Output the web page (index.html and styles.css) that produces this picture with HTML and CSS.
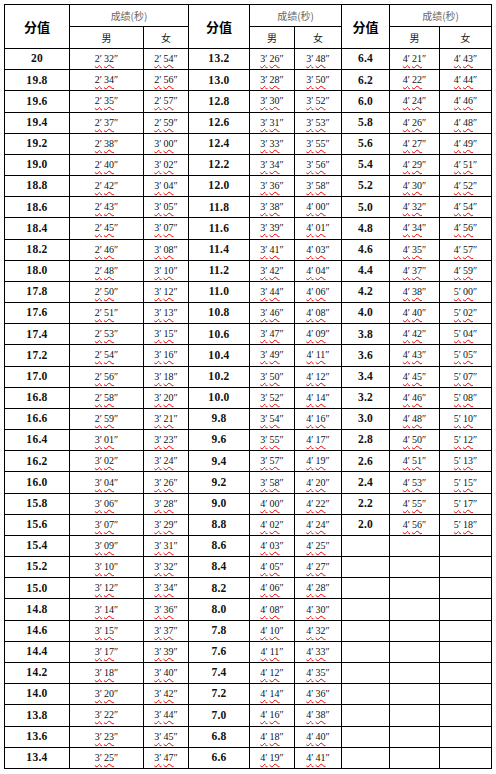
FILE: index.html
```html
<!DOCTYPE html>
<html lang="zh">
<head>
<meta charset="utf-8">
<title>分值 成绩</title>
<link rel="stylesheet" href="styles.css">
</head>
<body>
<table class="tbl">
<colgroup>
<col class="c1"><col class="c2"><col class="c3">
<col class="c4"><col class="c5"><col class="c6">
<col class="c7"><col class="c8"><col class="c9">
</colgroup>
<thead>
<tr class="hr"><th rowspan="2" class="h">分值</th><th colspan="2" class="g">成绩(秒)</th><th rowspan="2" class="h">分值</th><th colspan="2" class="g">成绩(秒)</th><th rowspan="2" class="h">分值</th><th colspan="2" class="g">成绩(秒)</th></tr>
<tr class="hr"><th class="x">男</th><th class="x">女</th><th class="x">男</th><th class="x">女</th><th class="x">男</th><th class="x">女</th></tr>
</thead>
<tbody>
<tr><td class="s">20</td><td class="t"><u>2<i>′</i>32</u>″</td><td class="t"><u>2<i>′</i>54</u>″</td><td class="s">13.2</td><td class="t"><u>3<i>′</i>26</u>″</td><td class="t"><u>3<i>′</i>48</u>″</td><td class="s">6.4</td><td class="t"><u>4<i>′</i>21</u>″</td><td class="t"><u>4<i>′</i>43</u>″</td></tr>
<tr><td class="s">19.8</td><td class="t"><u>2<i>′</i>34</u>″</td><td class="t"><u>2<i>′</i>56</u>″</td><td class="s">13.0</td><td class="t"><u>3<i>′</i>28</u>″</td><td class="t"><u>3<i>′</i>50</u>″</td><td class="s">6.2</td><td class="t"><u>4<i>′</i>22</u>″</td><td class="t"><u>4<i>′</i>44</u>″</td></tr>
<tr><td class="s">19.6</td><td class="t"><u>2<i>′</i>35</u>″</td><td class="t"><u>2<i>′</i>57</u>″</td><td class="s">12.8</td><td class="t"><u>3<i>′</i>30</u>″</td><td class="t"><u>3<i>′</i>52</u>″</td><td class="s">6.0</td><td class="t"><u>4<i>′</i>24</u>″</td><td class="t"><u>4<i>′</i>46</u>″</td></tr>
<tr><td class="s">19.4</td><td class="t"><u>2<i>′</i>37</u>″</td><td class="t"><u>2<i>′</i>59</u>″</td><td class="s">12.6</td><td class="t"><u>3<i>′</i>31</u>″</td><td class="t"><u>3<i>′</i>53</u>″</td><td class="s">5.8</td><td class="t"><u>4<i>′</i>26</u>″</td><td class="t"><u>4<i>′</i>48</u>″</td></tr>
<tr><td class="s">19.2</td><td class="t"><u>2<i>′</i>38</u>″</td><td class="t"><u>3<i>′</i>00</u>″</td><td class="s">12.4</td><td class="t"><u>3<i>′</i>33</u>″</td><td class="t"><u>3<i>′</i>55</u>″</td><td class="s">5.6</td><td class="t"><u>4<i>′</i>27</u>″</td><td class="t"><u>4<i>′</i>49</u>″</td></tr>
<tr><td class="s">19.0</td><td class="t"><u>2<i>′</i>40</u>″</td><td class="t"><u>3<i>′</i>02</u>″</td><td class="s">12.2</td><td class="t"><u>3<i>′</i>34</u>″</td><td class="t"><u>3<i>′</i>56</u>″</td><td class="s">5.4</td><td class="t"><u>4<i>′</i>29</u>″</td><td class="t"><u>4<i>′</i>51</u>″</td></tr>
<tr><td class="s">18.8</td><td class="t"><u>2<i>′</i>42</u>″</td><td class="t"><u>3<i>′</i>04</u>″</td><td class="s">12.0</td><td class="t"><u>3<i>′</i>36</u>″</td><td class="t"><u>3<i>′</i>58</u>″</td><td class="s">5.2</td><td class="t"><u>4<i>′</i>30</u>″</td><td class="t"><u>4<i>′</i>52</u>″</td></tr>
<tr><td class="s">18.6</td><td class="t"><u>2<i>′</i>43</u>″</td><td class="t"><u>3<i>′</i>05</u>″</td><td class="s">11.8</td><td class="t"><u>3<i>′</i>38</u>″</td><td class="t"><u>4<i>′</i>00</u>″</td><td class="s">5.0</td><td class="t"><u>4<i>′</i>32</u>″</td><td class="t"><u>4<i>′</i>54</u>″</td></tr>
<tr><td class="s">18.4</td><td class="t"><u>2<i>′</i>45</u>″</td><td class="t"><u>3<i>′</i>07</u>″</td><td class="s">11.6</td><td class="t"><u>3<i>′</i>39</u>″</td><td class="t"><u>4<i>′</i>01</u>″</td><td class="s">4.8</td><td class="t"><u>4<i>′</i>34</u>″</td><td class="t"><u>4<i>′</i>56</u>″</td></tr>
<tr><td class="s">18.2</td><td class="t"><u>2<i>′</i>46</u>″</td><td class="t"><u>3<i>′</i>08</u>″</td><td class="s">11.4</td><td class="t"><u>3<i>′</i>41</u>″</td><td class="t"><u>4<i>′</i>03</u>″</td><td class="s">4.6</td><td class="t"><u>4<i>′</i>35</u>″</td><td class="t"><u>4<i>′</i>57</u>″</td></tr>
<tr><td class="s">18.0</td><td class="t"><u>2<i>′</i>48</u>″</td><td class="t"><u>3<i>′</i>10</u>″</td><td class="s">11.2</td><td class="t"><u>3<i>′</i>42</u>″</td><td class="t"><u>4<i>′</i>04</u>″</td><td class="s">4.4</td><td class="t"><u>4<i>′</i>37</u>″</td><td class="t"><u>4<i>′</i>59</u>″</td></tr>
<tr><td class="s">17.8</td><td class="t"><u>2<i>′</i>50</u>″</td><td class="t"><u>3<i>′</i>12</u>″</td><td class="s">11.0</td><td class="t"><u>3<i>′</i>44</u>″</td><td class="t"><u>4<i>′</i>06</u>″</td><td class="s">4.2</td><td class="t"><u>4<i>′</i>38</u>″</td><td class="t"><u>5<i>′</i>00</u>″</td></tr>
<tr><td class="s">17.6</td><td class="t"><u>2<i>′</i>51</u>″</td><td class="t"><u>3<i>′</i>13</u>″</td><td class="s">10.8</td><td class="t"><u>3<i>′</i>46</u>″</td><td class="t"><u>4<i>′</i>08</u>″</td><td class="s">4.0</td><td class="t"><u>4<i>′</i>40</u>″</td><td class="t"><u>5<i>′</i>02</u>″</td></tr>
<tr><td class="s">17.4</td><td class="t"><u>2<i>′</i>53</u>″</td><td class="t"><u>3<i>′</i>15</u>″</td><td class="s">10.6</td><td class="t"><u>3<i>′</i>47</u>″</td><td class="t"><u>4<i>′</i>09</u>″</td><td class="s">3.8</td><td class="t"><u>4<i>′</i>42</u>″</td><td class="t"><u>5<i>′</i>04</u>″</td></tr>
<tr><td class="s">17.2</td><td class="t"><u>2<i>′</i>54</u>″</td><td class="t"><u>3<i>′</i>16</u>″</td><td class="s">10.4</td><td class="t"><u>3<i>′</i>49</u>″</td><td class="t"><u>4<i>′</i>11</u>″</td><td class="s">3.6</td><td class="t"><u>4<i>′</i>43</u>″</td><td class="t"><u>5<i>′</i>05</u>″</td></tr>
<tr><td class="s">17.0</td><td class="t"><u>2<i>′</i>56</u>″</td><td class="t"><u>3<i>′</i>18</u>″</td><td class="s">10.2</td><td class="t"><u>3<i>′</i>50</u>″</td><td class="t"><u>4<i>′</i>12</u>″</td><td class="s">3.4</td><td class="t"><u>4<i>′</i>45</u>″</td><td class="t"><u>5<i>′</i>07</u>″</td></tr>
<tr><td class="s">16.8</td><td class="t"><u>2<i>′</i>58</u>″</td><td class="t"><u>3<i>′</i>20</u>″</td><td class="s">10.0</td><td class="t"><u>3<i>′</i>52</u>″</td><td class="t"><u>4<i>′</i>14</u>″</td><td class="s">3.2</td><td class="t"><u>4<i>′</i>46</u>″</td><td class="t"><u>5<i>′</i>08</u>″</td></tr>
<tr><td class="s">16.6</td><td class="t"><u>2<i>′</i>59</u>″</td><td class="t"><u>3<i>′</i>21</u>″</td><td class="s">9.8</td><td class="t"><u>3<i>′</i>54</u>″</td><td class="t"><u>4<i>′</i>16</u>″</td><td class="s">3.0</td><td class="t"><u>4<i>′</i>48</u>″</td><td class="t"><u>5<i>′</i>10</u>″</td></tr>
<tr><td class="s">16.4</td><td class="t"><u>3<i>′</i>01</u>″</td><td class="t"><u>3<i>′</i>23</u>″</td><td class="s">9.6</td><td class="t"><u>3<i>′</i>55</u>″</td><td class="t"><u>4<i>′</i>17</u>″</td><td class="s">2.8</td><td class="t"><u>4<i>′</i>50</u>″</td><td class="t"><u>5<i>′</i>12</u>″</td></tr>
<tr><td class="s">16.2</td><td class="t"><u>3<i>′</i>02</u>″</td><td class="t"><u>3<i>′</i>24</u>″</td><td class="s">9.4</td><td class="t"><u>3<i>′</i>57</u>″</td><td class="t"><u>4<i>′</i>19</u>″</td><td class="s">2.6</td><td class="t"><u>4<i>′</i>51</u>″</td><td class="t"><u>5<i>′</i>13</u>″</td></tr>
<tr><td class="s">16.0</td><td class="t"><u>3<i>′</i>04</u>″</td><td class="t"><u>3<i>′</i>26</u>″</td><td class="s">9.2</td><td class="t"><u>3<i>′</i>58</u>″</td><td class="t"><u>4<i>′</i>20</u>″</td><td class="s">2.4</td><td class="t"><u>4<i>′</i>53</u>″</td><td class="t"><u>5<i>′</i>15</u>″</td></tr>
<tr><td class="s">15.8</td><td class="t"><u>3<i>′</i>06</u>″</td><td class="t"><u>3<i>′</i>28</u>″</td><td class="s">9.0</td><td class="t"><u>4<i>′</i>00</u>″</td><td class="t"><u>4<i>′</i>22</u>″</td><td class="s">2.2</td><td class="t"><u>4<i>′</i>55</u>″</td><td class="t"><u>5<i>′</i>17</u>″</td></tr>
<tr><td class="s">15.6</td><td class="t"><u>3<i>′</i>07</u>″</td><td class="t"><u>3<i>′</i>29</u>″</td><td class="s">8.8</td><td class="t"><u>4<i>′</i>02</u>″</td><td class="t"><u>4<i>′</i>24</u>″</td><td class="s">2.0</td><td class="t"><u>4<i>′</i>56</u>″</td><td class="t"><u>5<i>′</i>18</u>″</td></tr>
<tr><td class="s">15.4</td><td class="t"><u>3<i>′</i>09</u>″</td><td class="t"><u>3<i>′</i>31</u>″</td><td class="s">8.6</td><td class="t"><u>4<i>′</i>03</u>″</td><td class="t"><u>4<i>′</i>25</u>″</td><td></td><td></td><td></td></tr>
<tr><td class="s">15.2</td><td class="t"><u>3<i>′</i>10</u>″</td><td class="t"><u>3<i>′</i>32</u>″</td><td class="s">8.4</td><td class="t"><u>4<i>′</i>05</u>″</td><td class="t"><u>4<i>′</i>27</u>″</td><td></td><td></td><td></td></tr>
<tr><td class="s">15.0</td><td class="t"><u>3<i>′</i>12</u>″</td><td class="t"><u>3<i>′</i>34</u>″</td><td class="s">8.2</td><td class="t"><u>4<i>′</i>06</u>″</td><td class="t"><u>4<i>′</i>28</u>″</td><td></td><td></td><td></td></tr>
<tr><td class="s">14.8</td><td class="t"><u>3<i>′</i>14</u>″</td><td class="t"><u>3<i>′</i>36</u>″</td><td class="s">8.0</td><td class="t"><u>4<i>′</i>08</u>″</td><td class="t"><u>4<i>′</i>30</u>″</td><td></td><td></td><td></td></tr>
<tr><td class="s">14.6</td><td class="t"><u>3<i>′</i>15</u>″</td><td class="t"><u>3<i>′</i>37</u>″</td><td class="s">7.8</td><td class="t"><u>4<i>′</i>10</u>″</td><td class="t"><u>4<i>′</i>32</u>″</td><td></td><td></td><td></td></tr>
<tr><td class="s">14.4</td><td class="t"><u>3<i>′</i>17</u>″</td><td class="t"><u>3<i>′</i>39</u>″</td><td class="s">7.6</td><td class="t"><u>4<i>′</i>11</u>″</td><td class="t"><u>4<i>′</i>33</u>″</td><td></td><td></td><td></td></tr>
<tr><td class="s">14.2</td><td class="t"><u>3<i>′</i>18</u>″</td><td class="t"><u>3<i>′</i>40</u>″</td><td class="s">7.4</td><td class="t"><u>4<i>′</i>12</u>″</td><td class="t"><u>4<i>′</i>35</u>″</td><td></td><td></td><td></td></tr>
<tr><td class="s">14.0</td><td class="t"><u>3<i>′</i>20</u>″</td><td class="t"><u>3<i>′</i>42</u>″</td><td class="s">7.2</td><td class="t"><u>4<i>′</i>14</u>″</td><td class="t"><u>4<i>′</i>36</u>″</td><td></td><td></td><td></td></tr>
<tr><td class="s">13.8</td><td class="t"><u>3<i>′</i>22</u>″</td><td class="t"><u>3<i>′</i>44</u>″</td><td class="s">7.0</td><td class="t"><u>4<i>′</i>16</u>″</td><td class="t"><u>4<i>′</i>38</u>″</td><td></td><td></td><td></td></tr>
<tr><td class="s">13.6</td><td class="t"><u>3<i>′</i>23</u>″</td><td class="t"><u>3<i>′</i>45</u>″</td><td class="s">6.8</td><td class="t"><u>4<i>′</i>18</u>″</td><td class="t"><u>4<i>′</i>40</u>″</td><td></td><td></td><td></td></tr>
<tr><td class="s">13.4</td><td class="t"><u>3<i>′</i>25</u>″</td><td class="t"><u>3<i>′</i>47</u>″</td><td class="s">6.6</td><td class="t"><u>4<i>′</i>19</u>″</td><td class="t"><u>4<i>′</i>41</u>″</td><td></td><td></td><td></td></tr>
</tbody>
</table>
</body>
</html>
```
FILE: styles.css
```css
html, body {
  background: #fff;
}
body {
  margin: 4px;
  font-family: "Liberation Serif", serif;
  color: #000;
}
.tbl {
  border-collapse: collapse;
  table-layout: fixed;
  width: 488px;
}
.c1 { width: 65px; }
.c2 { width: 74px; }
.c3 { width: 45px; }
.c4 { width: 61px; }
.c5 { width: 45px; }
.c6 { width: 47px; }
.c7 { width: 48px; }
.c8 { width: 50px; }
.c9 { width: 52px; }
.tbl th,
.tbl td {
  border: 1px solid #000;
  padding: 0;
  text-align: center;
  vertical-align: middle;
  line-height: 1;
  overflow: hidden;
  white-space: nowrap;
}
.hr { height: 22px; }
.tbl tbody tr { height: 21.18px; }
.h {
  font: bold 13px "Noto Sans CJK SC", sans-serif;
  color: #000;
}
.g {
  font: 10px "Noto Sans CJK SC", sans-serif;
  color: #666;
}
.x {
  font: 10px "Noto Sans CJK SC", sans-serif;
  color: #222;
}
.s {
  font: bold 11.5px "Liberation Serif", serif;
  letter-spacing: 0.3px;
  color: #111;
}
.t {
  font: 10px "Liberation Serif", serif;
  color: #111;
  padding-bottom: 2px;
}
.t u {
  text-decoration: underline wavy #e00;
  text-decoration-thickness: 1px;
  text-underline-offset: 2px;
}
.t i {
  font-style: normal;
  margin-right: 2px;
}
```
